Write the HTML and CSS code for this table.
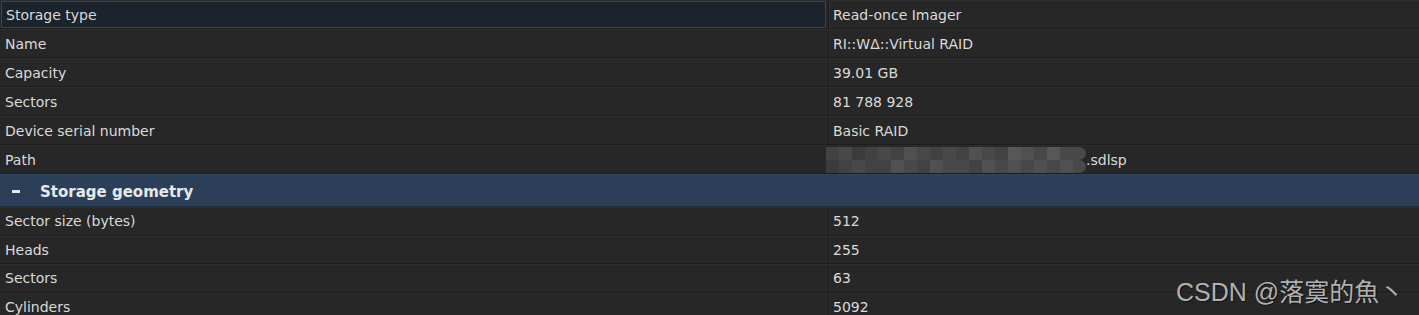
FILE: index.html
```html
<!DOCTYPE html>
<html>
<head>
<meta charset="utf-8">
<link rel="stylesheet" href="styles.css">
</head>
<body>
<div class="grid">
  <div class="row selected"><div class="label"><span>Storage type</span></div><div class="value">Read-once Imager</div></div>
  <div class="row"><div class="label">Name</div><div class="value">RI::WΔ::Virtual RAID</div></div>
  <div class="row"><div class="label">Capacity</div><div class="value">39.01 GB</div></div>
  <div class="row"><div class="label">Sectors</div><div class="value">81 788 928</div></div>
  <div class="row"><div class="label">Device serial number</div><div class="value">Basic RAID</div></div>
  <div class="row"><div class="label">Path</div><div class="value path">
    <div class="mosaic">
      <i class="c2"></i><i class="c3"></i><i class="c1"></i><i class="c2"></i><i class="c3"></i><i class="c2"></i><i class="c4"></i><i class="c3"></i><i class="c2"></i><i class="c3"></i><i class="c2"></i><i class="c4"></i><i class="c3"></i><i class="c2"></i><i class="c5"></i><i class="c4"></i><i class="c3"></i><i class="c5"></i><i class="c3"></i><i class="c3 end"></i>
      <i class="c1"></i><i class="c2"></i><i class="c3"></i><i class="c2"></i><i class="c2"></i><i class="c4"></i><i class="c3"></i><i class="c2"></i><i class="c4"></i><i class="c3"></i><i class="c3"></i><i class="c2"></i><i class="c4"></i><i class="c3"></i><i class="c4"></i><i class="c3"></i><i class="c4"></i><i class="c3"></i><i class="c4"></i><i class="c3 end"></i>
    </div>
    <span class="ext">.sdlsp</span>
  </div></div>
  <div class="group"><span class="minus"></span><span class="gtitle">Storage geometry</span></div>
  <div class="row low"><div class="label">Sector size (bytes)</div><div class="value">512</div></div>
  <div class="row low"><div class="label">Heads</div><div class="value">255</div></div>
  <div class="row low"><div class="label">Sectors</div><div class="value">63</div></div>
  <div class="row low"><div class="label">Cylinders</div><div class="value">5092</div></div>
</div>
<div class="watermark">CSDN @落寞的魚丶</div>
</body>
</html>
```

FILE: styles.css
```css
html, body {
  margin: 0;
  padding: 0;
  background: #262626;
  width: 1419px;
  height: 315px;
  overflow: hidden;
}
body {
  font-family: "DejaVu Sans", Verdana, sans-serif;
  font-size: 14px;
  color: #dadada;
  position: relative;
}
.grid {
  display: flex;
  flex-direction: column;
}
.row {
  display: grid;
  grid-template-columns: 828px 1fr;
  height: 29px;
  flex: none;
  box-sizing: border-box;
  padding-top: 1px;
  background: #272727;
  border-bottom: 1px solid #1d1d1d;
  box-shadow: inset 0 1px 0 #2d2d2d;
}
.row.low {
  height: 28.5px;
}
.label {
  display: flex;
  align-items: center;
  padding-left: 5px;
  white-space: nowrap;
}
.value {
  display: flex;
  align-items: center;
  padding-left: 4px;
  border-left: 1px solid #1b1b1b;
  box-shadow: inset 1px 0 0 #303030;
  white-space: nowrap;
}
.selected {
  padding-top: 0;
}
.selected .label {
  margin: 1px 2px 0 1px;
  padding: 1px 0 0 4px;
  background: #1b232c;
  border: 1px solid #3a4550;
  border-radius: 1px;
}
.selected .value {
  padding-top: 2px;
}
.path {
  padding-left: 0;
}
.mosaic {
  display: grid;
  grid-template-columns: repeat(20, 13px);
  grid-template-rows: 13px 13px;
  width: 260px;
  margin-left: -3px;
  margin-top: 0;
}
.mosaic i { display: block; }
.mosaic .c1 { background: #3b3b3b; }
.mosaic .c2 { background: #424242; }
.mosaic .c3 { background: #484848; }
.mosaic .c4 { background: #505050; }
.mosaic .c5 { background: #575757; }
.mosaic .end { border-radius: 0 7px 7px 0; }
.group {
  display: flex;
  align-items: center;
  height: 33px;
  flex: none;
  box-sizing: border-box;
  padding-top: 2px;
  background: #2b4058;
  border-top: 1px solid #2f4660;
  border-bottom: 1px solid #1f2c3a;
  font-family: "DejaVu Sans", sans-serif;
  font-weight: bold;
  font-size: 15px;
  color: #e6e8ea;
}
.minus {
  width: 8px;
  height: 3px;
  margin: 0 20px 0 12px;
  background: #e6e8ea;
}
.watermark {
  position: absolute;
  left: 1176px;
  top: 272px;
  font-family: "Liberation Sans", "Noto Sans CJK SC", sans-serif;
  font-size: 25px;
  color: rgba(205, 205, 205, 0.85);
  text-shadow: 1px 1px 1px rgba(0,0,0,0.5);
  white-space: nowrap;
}
```
